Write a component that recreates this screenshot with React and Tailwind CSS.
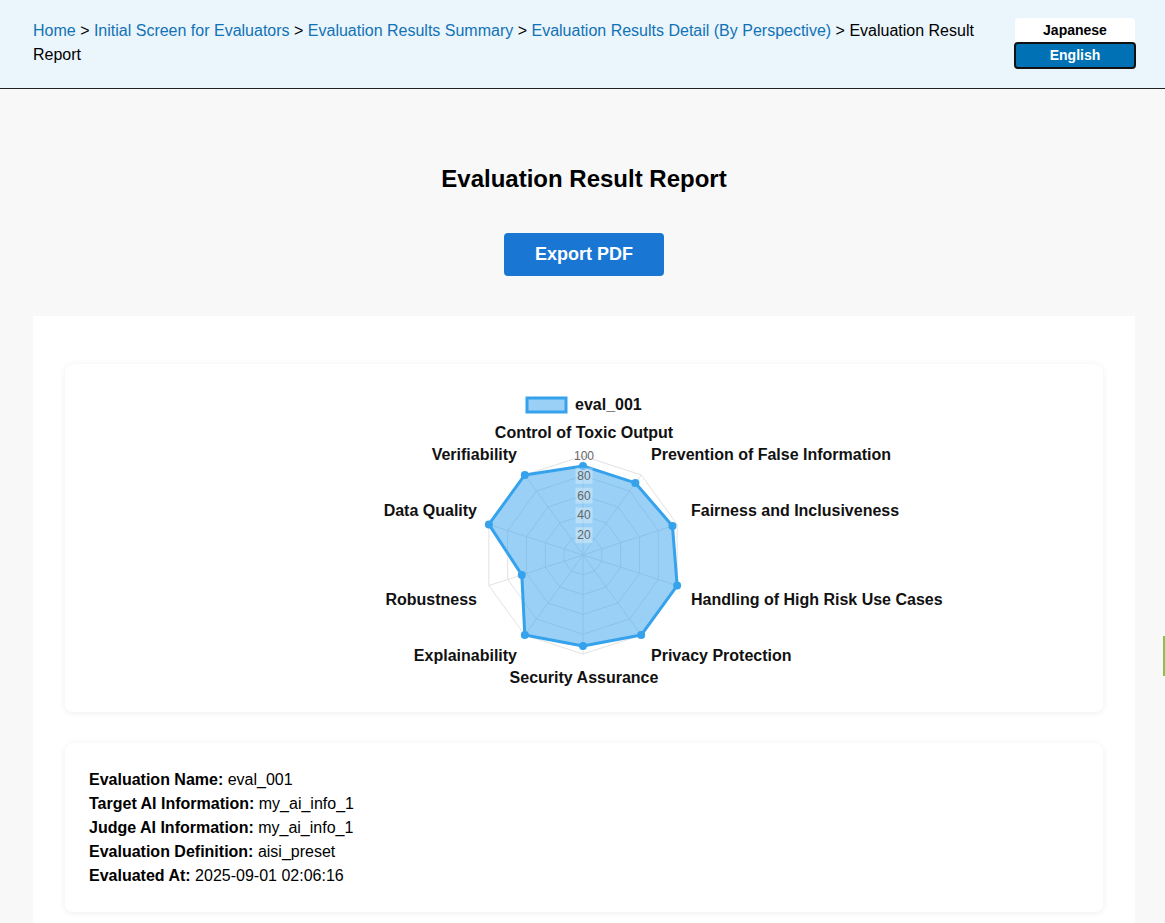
const crumbs = [
  'Home',
  'Initial Screen for Evaluators',
  'Evaluation Results Summary',
  'Evaluation Results Detail (By Perspective)',
];

// radar data, clockwise from top
const axes = [
  { label: 'Control of Toxic Output', value: 90, x: 519, y: 68, anchor: 'middle' },
  { label: 'Prevention of False Information', value: 90, x: 586, y: 90, anchor: 'start' },
  { label: 'Fairness and Inclusiveness', value: 95, x: 626, y: 146, anchor: 'start' },
  { label: 'Handling of High Risk Use Cases', value: 100, x: 626, y: 235, anchor: 'start' },
  { label: 'Privacy Protection', value: 100, x: 586, y: 291, anchor: 'start' },
  { label: 'Security Assurance', value: 92, x: 519, y: 313, anchor: 'middle' },
  { label: 'Explainability', value: 100, x: 452, y: 291, anchor: 'end' },
  { label: 'Robustness', value: 65, x: 412, y: 235, anchor: 'end' },
  { label: 'Data Quality', value: 100, x: 412, y: 146, anchor: 'end' },
  { label: 'Verifiability', value: 100, x: 452, y: 90, anchor: 'end' },
];

const CX = 518;
const CY = 191;
const R = 99;

function pt(i, v) {
  const a = (-90 + 36 * i) * (Math.PI / 180);
  const r = (R * v) / 100;
  return [CX + r * Math.cos(a), CY + r * Math.sin(a)];
}

function RadarChart() {
  const rings = [20, 40, 60, 80, 100];
  const data = axes.map((a, i) => pt(i, a.value));
  const font = { fontFamily: '"Liberation Sans", Arial, sans-serif' };

  return (
    <svg viewBox="0 0 1038 348" className="w-full h-[348px] block" style={font}>
      {/* legend */}
      <rect x="462" y="34" width="39" height="14" fill="#9ad0f5" stroke="#36a2eb" strokeWidth="3" />
      <text x="510" y="46" fontSize="16" fontWeight="bold" fill="#111">eval_001</text>

      {/* grid */}
      {rings.map((v) => (
        <polygon
          key={v}
          points={axes.map((_, i) => pt(i, v).join(',')).join(' ')}
          fill="none"
          stroke="#e2e2e2"
          strokeWidth="1"
        />
      ))}
      {axes.map((_, i) => {
        const [x, y] = pt(i, 100);
        return <line key={i} x1={CX} y1={CY} x2={x} y2={y} stroke="#e2e2e2" strokeWidth="1" />;
      })}

      {/* dataset */}
      <polygon
        points={data.map((p) => p.join(',')).join(' ')}
        fill="rgba(54,162,235,0.5)"
        stroke="#36a2eb"
        strokeWidth="3"
        strokeLinejoin="round"
      />
      {data.map(([x, y], i) => (
        <circle key={i} cx={x} cy={y} r="4" fill="#36a2eb" />
      ))}

      {/* ticks */}
      {rings.map((v) => {
        const y = CY - (R * v) / 100;
        const w = v === 100 ? 24 : 17;
        return (
          <g key={v}>
            {v !== 100 && <rect x={CX - w / 2 + 1} y={y - 8} width={w} height={16} fill="rgba(255,255,255,0.3)" />}
            <text x={CX + 1} y={y + 4} fontSize="12" textAnchor="middle" fill="#666">{v}</text>
          </g>
        );
      })}

      {/* point labels */}
      {axes.map((a) => (
        <text key={a.label} x={a.x} y={a.y + 6} fontSize="16" fontWeight="bold" textAnchor={a.anchor} fill="#111">
          {a.label}
        </text>
      ))}
    </svg>
  );
}

const info = [
  ['Evaluation Name:', 'eval_001'],
  ['Target AI Information:', 'my_ai_info_1'],
  ['Judge AI Information:', 'my_ai_info_1'],
  ['Evaluation Definition:', 'aisi_preset'],
  ['Evaluated At:', '2025-09-01 02:06:16'],
];

export default function App() {
  return (
    <div className="min-h-[923px] bg-[#f8f8f8] font-['Liberation_Sans',Arial,sans-serif] text-black">
      <header className="h-[89px] bg-[#eaf5fc] border-b border-[#222] flex justify-between pl-[33px] pr-[29px] pt-[18px]">
        <nav className="mt-[1px] text-[16px] leading-[24px] max-w-[950px]">
          {crumbs.map((c) => (
            <span key={c}>
              <a href="#" className="text-[#1172b5]">{c}</a>
              <span> &gt; </span>
            </span>
          ))}
          <span>Evaluation Result Report</span>
        </nav>
        <div className="flex flex-col w-[122px] text-[14px] font-bold">
          <button className="mx-[1px] h-[24px] bg-white rounded-t-[4px] text-black">Japanese</button>
          <button className="h-[27px] bg-[#0071b4] border-2 border-[#111] rounded-[4px] text-white">English</button>
        </div>
      </header>

      <main className="pl-[33px] pr-[30px] pb-10">
        <h1 className="mt-[76px] text-center text-[24px] leading-[28px] font-bold">Evaluation Result Report</h1>
        <div className="flex justify-center mt-[40px]">
          <button className="w-[160px] h-[43px] rounded-[4px] bg-[#1976d2] text-white text-[18px] font-bold">
            Export PDF
          </button>
        </div>

        <section className="mt-[40px] bg-white px-[32px] pt-[48px] pb-12">
          <div className="rounded-lg bg-white shadow-[0_1px_6px_rgba(0,0,0,0.07)]">
            <RadarChart />
          </div>

          <div className="mt-[31px] rounded-lg bg-white shadow-[0_1px_6px_rgba(0,0,0,0.07)] px-6 pt-[25px] pb-6 text-[16px] leading-[24px]">
            {info.map(([k, v]) => (
              <div key={k}>
                <span className="font-bold">{k}</span> {v}
              </div>
            ))}
          </div>
        </section>
      </main>

      <div className="fixed right-0 top-[636px] w-[2px] h-[40px] bg-[#8bc34a]" />
    </div>
  );
}
